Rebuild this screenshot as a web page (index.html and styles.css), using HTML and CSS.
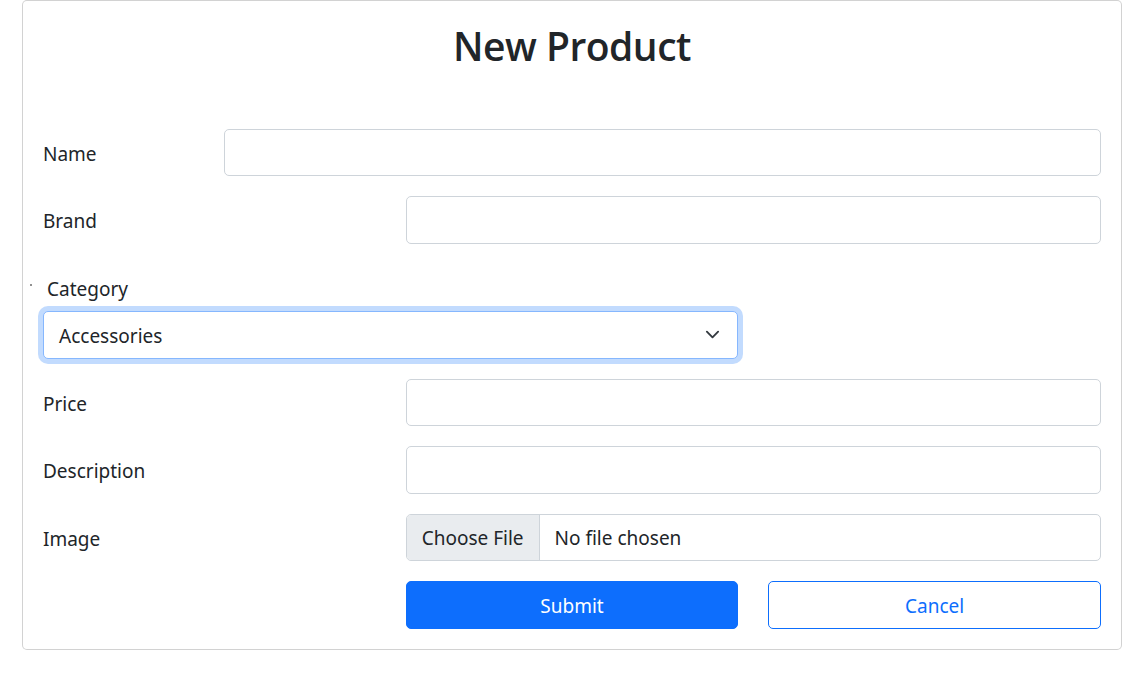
FILE: index.html
```html
<!DOCTYPE html>
<html lang="en">
<head>
<meta charset="utf-8">
<title>New Product</title>
<link rel="stylesheet" href="styles.css">
</head>
<body>
<div class="card">
  <div class="card-body">
    <h1 class="title">New Product</h1>
    <form class="form">
      <div class="row">
        <label class="label span-2">Name</label>
        <div class="span-10"><div class="control"></div></div>
      </div>
      <div class="row">
        <label class="label span-4">Brand</label>
        <div class="span-8"><div class="control"></div></div>
      </div>
      <div class="row">
        <div class="span-8 category">
          <span class="dot"></span>
          <label class="cat-label">Category</label>
          <div class="control select is-focused">
            <span class="select-text">Accessories</span>
            <svg class="chevron" viewBox="0 0 16 16" width="15" height="15" aria-hidden="true"><path d="M2 5l6 6 6-6" fill="none" stroke="#343a40" stroke-width="2" stroke-linecap="round" stroke-linejoin="round"/></svg>
          </div>
        </div>
      </div>
      <div class="row">
        <label class="label span-4">Price</label>
        <div class="span-8"><div class="control"></div></div>
      </div>
      <div class="row">
        <label class="label span-4">Description</label>
        <div class="span-8"><div class="control"></div></div>
      </div>
      <div class="row">
        <label class="label span-4">Image</label>
        <div class="span-8">
          <div class="control file">
            <span class="file-btn">Choose File</span>
            <span class="file-name">No file chosen</span>
          </div>
        </div>
      </div>
      <div class="row last">
        <div class="span-4"></div>
        <div class="span-4"><button type="button" class="btn btn-primary">Submit</button></div>
        <div class="span-4"><button type="button" class="btn btn-outline">Cancel</button></div>
      </div>
    </form>
  </div>
</div>
</body>
</html>
```
FILE: styles.css
```css
* { box-sizing: border-box; }

html, body {
  margin: 0;
  padding: 0;
  background: #fff;
}

body {
  font-family: "Noto Sans", "Open Sans", sans-serif;
  font-size: 19px;
  line-height: 30px;
  color: #212529;
}

.card {
  margin: 0 18px 0 22px;
  width: 1100px;
  border: 1px solid rgba(0, 0, 0, 0.175);
  border-radius: 5px;
  background: #fff;
}

.card-body {
  padding: 20px;
}

.title {
  margin: 0 0 57.5px;
  font-family: "Open Sans", "Noto Sans", sans-serif;
  font-size: 39px;
  line-height: 50px;
  font-weight: 600;
  letter-spacing: -0.5px;
  text-align: center;
  color: #212529;
}

.form {
  display: flex;
  flex-direction: column;
  gap: 20px;
}

.row {
  display: grid;
  grid-template-columns: repeat(12, minmax(0, 1fr));
  column-gap: 30px;
  align-items: center;
}

.span-2 { grid-column: span 2; }
.span-4 { grid-column: span 4; }
.span-8 { grid-column: span 8; }
.span-10 { grid-column: span 10; }

.label {
  display: block;
  padding-top: 3px;
}

.control {
  height: 47.5px;
  border: 1px solid #ced4da;
  border-radius: 5px;
  background: #fff;
}

.category {
  position: relative;
  padding-top: 7.5px;
}

.dot {
  position: absolute;
  left: -13px;
  top: 20px;
  width: 2px;
  height: 2px;
  border-radius: 1px;
  background: #6c6c6c;
}

.cat-label {
  display: block;
  padding-left: 4px;
  margin-top: 3px;
  margin-bottom: 7px;
}

.select {
  display: flex;
  align-items: center;
  justify-content: space-between;
  padding: 0 17px 0 15px;
}

.select-text {
  padding-top: 3px;
}

.select.is-focused {
  border-color: #86b7fe;
  box-shadow: 0 0 0 5px rgba(13, 110, 253, 0.25);
}

.chevron {
  display: block;
}

.file {
  display: flex;
  align-items: stretch;
  overflow: hidden;
}

.file-btn {
  display: flex;
  align-items: center;
  padding: 2px 15px 0;
  background: #e9ecef;
  border-right: 1px solid #ced4da;
}

.file-name {
  display: flex;
  align-items: center;
  padding: 2px 15px 0;
}

.btn {
  display: block;
  width: 100%;
  height: 47.5px;
  padding: 3px 0 0;
  border-radius: 5px;
  font-family: inherit;
  font-size: 19px;
  line-height: 30px;
  cursor: pointer;
}

.btn-primary {
  background: #0d6efd;
  border: 1px solid #0d6efd;
  color: #fff;
}

.btn-outline {
  background: #fff;
  border: 1px solid #0d6efd;
  color: #0d6efd;
}
```
